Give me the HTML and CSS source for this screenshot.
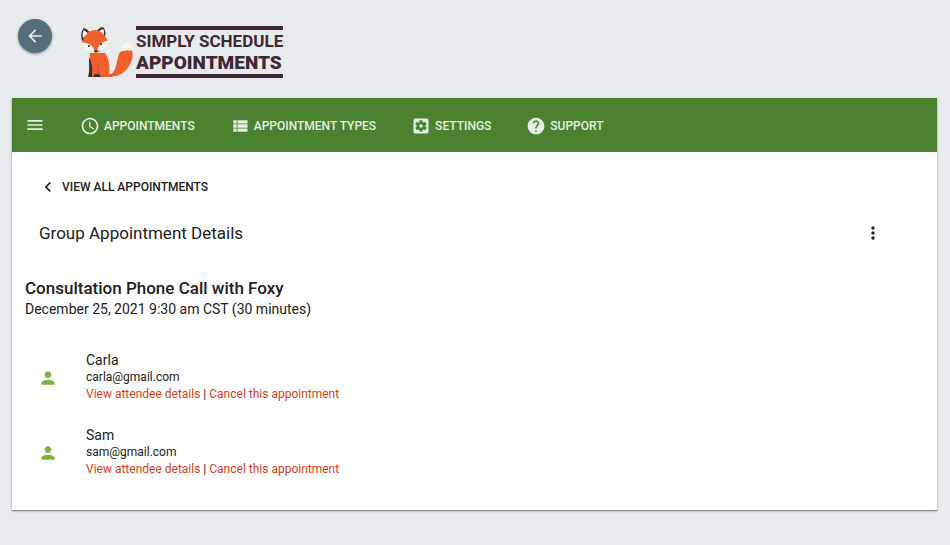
FILE: index.html
```
<!DOCTYPE html>
<html lang="en">
<head>
  <meta charset="UTF-8">
  <meta name="viewport" content="width=device-width, initial-scale=1">
  <title>Simply Schedule Appointments</title>
  <link rel="stylesheet" href="styles.css">
</head>
<body>
  <header class="header">
    <button type="button" class="back-button" aria-label="Back">
      <svg viewBox="0 0 24 24"><path d="M20 11H7.830l5.590-5.590L12 4l-8 8 8 8 1.410-1.410L7.830 13H20v-2z"/></svg>
    </button>
    <div class="logo">
      <svg class="fox" viewBox="0 0 54 54">
        <!-- tail -->
        <path fill="#f15f2c" d="M26 51C36 46 35 38 37 31C38 27 40 24 42 22L51 24C53 31 50 39 45 44C40 49 35 51 26 51z"/>
        <path fill="#fdf3e7" d="M39 26C40 20 45 16 49 15C50 18 52 20 52 25C50 23 48 26 46 24C44 26 41 24 39 26z"/>
        <!-- body -->
        <path fill="#f15f2c" d="M9 27H24C29 34 29 43 28 48H35L30 51H10C8 43 8 35 9 27z"/>
        <path fill="#3f2834" d="M8 32C12 37 11 45 11 51H7C9 45 8 38 8 32zM14 48H18L20 51H12z"/>
        <path fill="none" stroke="#b54731" stroke-dasharray="2 1" d="M18 37C16 41 17 45 18 48"/>
        <!-- ears -->
        <path fill="#3f2834" d="M1 15C-1 8 1 4 3 2C6 3 9 6 10 8L4 14zM16 5C18 2 20 1 22 1C25 4 25 9 23 13L16 8z"/>
        <path fill="#fdf3e7" d="M2 12C1 8 2 5 3 4L8 8zM18 5L22 3C24 5 23 8 22 10z"/>
        <!-- face -->
        <path fill="#f15f2c" d="M1 18C3 9 8 4 14 4C20 4 25 10 27 16C25 21 20 25 15 27C8 25 4 22 1 18z"/>
        <path fill="#fdf3e7" d="M0 17C6 16 11 18 14 25L13 26C7 26 2 23 0 17zM28 15C22 15 18 17 16 25C22 25 27 21 28 15z"/>
        <circle cx="8" cy="20" r="1" fill="#3f2834"/>
        <circle cx="20" cy="18" r="1" fill="#3f2834"/>
        <ellipse cx="15" cy="25" rx="2" ry="1" fill="#3f2834"/>
      </svg>
      <div class="logo-text">
        <span class="logo-top">SIMPLY SCHEDULE</span>
        <span class="logo-bottom">APPOINTMENTS</span>
      </div>
    </div>
  </header>

  <main class="panel">
    <nav class="toolbar">
      <button type="button" class="menu-button" aria-label="Menu">
        <svg viewBox="0 0 24 24"><path d="M3 18h18v-2H3v2zm0-5h18v-2H3v2zm0-7v2h18V6H3z"/></svg>
      </button>
      <a href="#appointments" class="nav-link">
        <svg viewBox="0 0 24 24"><path d="M11.990 2C6.470 2 2 6.480 2 12s4.470 10 9.990 10C17.520 22 22 17.520 22 12S17.520 2 11.990 2zM12 20c-4.420 0-8-3.580-8-8s3.580-8 8-8 8 3.580 8 8-3.580 8-8 8zm.5-13H11v6l5.250 3.150.75-1.230-4.500-2.670z"/></svg>
        Appointments
      </a>
      <a href="#types" class="nav-link">
        <svg viewBox="0 0 24 24"><path d="M4 14h4v-4H4v4zm0 5h4v-4H4v4zM4 9h4V5H4v4zm5 5h12v-4H9v4zm0 5h12v-4H9v4zM9 5v4h12V5H9z"/></svg>
        Appointment Types
      </a>
      <a href="#settings" class="nav-link">
        <svg viewBox="0 0 24 24"><path d="M12 10c-1.100 0-2 .9-2 2s.9 2 2 2 2-.9 2-2-.9-2-2-2zm7-7H5c-1.110 0-2 .9-2 2v14c0 1.100.89 2 2 2h14c1.110 0 2-.9 2-2V5c0-1.100-.89-2-2-2zm-1.750 9c0 .23-.02.46-.05.68l1.480 1.160c.13.11.17.3.08.45l-1.400 2.420c-.09.15-.27.21-.43.15l-1.740-.7c-.36.28-.76.51-1.180.69l-.26 1.850c-.03.17-.18.3-.35.3h-2.800c-.17 0-.32-.13-.35-.29l-.26-1.850c-.43-.18-.82-.41-1.180-.69l-1.740.7c-.16.06-.34 0-.43-.15l-1.400-2.420c-.09-.15-.05-.34.08-.45l1.480-1.160c-.03-.23-.05-.46-.05-.69s.02-.46.05-.68l-1.480-1.160c-.13-.11-.17-.3-.08-.45l1.400-2.420c.09-.15.27-.21.43-.15l1.740.7c.36-.28.76-.51 1.180-.69l.26-1.850c.03-.17.18-.3.35-.3h2.800c.17 0 .32.13.35.29l.26 1.850c.43.18.82.41 1.180.69l1.740-.7c.16-.06.34 0 .43.15l1.400 2.420c.09.15.05.34-.08.45l-1.480 1.160c.03.23.05.46.05.69z"/></svg>
        Settings
      </a>
      <a href="#support" class="nav-link">
        <svg viewBox="0 0 24 24"><path d="M12 2C6.480 2 2 6.480 2 12s4.480 10 10 10 10-4.480 10-10S17.520 2 12 2zm1 17h-2v-2h2v2zm2.070-7.750l-.9.920C13.450 12.900 13 13.500 13 15h-2v-.5c0-1.100.45-2.100 1.170-2.830l1.240-1.260c.37-.36.59-.86.59-1.410 0-1.100-.9-2-2-2s-2 .9-2 2H8c0-2.210 1.790-4 4-4s4 1.790 4 4c0 .88-.36 1.680-.93 2.250z"/></svg>
        Support
      </a>
    </nav>

    <a href="#all" class="view-all">
      <svg viewBox="0 0 24 24"><path d="M15.410 7.410L14 6l-6 6 6 6 1.410-1.410L10.830 12z"/></svg>
      View all appointments
    </a>

    <div class="title-bar">
      <h1>Group Appointment Details</h1>
      <button type="button" class="more-button" aria-label="More options">
        <svg viewBox="0 0 24 24"><path d="M12 8c1.100 0 2-.9 2-2s-.9-2-2-2-2 .9-2 2 .9 2 2 2zm0 2c-1.100 0-2 .9-2 2s.9 2 2 2 2-.9 2-2-.9-2-2-2zm0 6c-1.100 0-2 .9-2 2s.9 2 2 2 2-.9 2-2-.9-2-2-2z"/></svg>
      </button>
    </div>

    <section class="summary">
      <h2>Consultation Phone Call with Foxy</h2>
      <p>December 25, 2021 9:30 am CST (30 minutes)</p>
    </section>

    <ul class="attendees">
      <li class="attendee">
        <svg viewBox="0 0 24 24"><path d="M12 12c2.210 0 4-1.790 4-4s-1.790-4-4-4-4 1.790-4 4 1.790 4 4 4zm0 2c-2.670 0-8 1.340-8 4v2h16v-2c0-2.660-5.330-4-8-4z"/></svg>
        <div>
          <h3>Carla</h3>
          <p>carla@gmail.com</p>
          <p><a href="#carla">View attendee details</a> | <a href="#cancel-carla">Cancel this appointment</a></p>
        </div>
      </li>
      <li class="attendee">
        <svg viewBox="0 0 24 24"><path d="M12 12c2.210 0 4-1.790 4-4s-1.790-4-4-4-4 1.790-4 4 1.790 4 4 4zm0 2c-2.670 0-8 1.340-8 4v2h16v-2c0-2.660-5.330-4-8-4z"/></svg>
        <div>
          <h3>Sam</h3>
          <p>sam@gmail.com</p>
          <p><a href="#sam">View attendee details</a> | <a href="#cancel-sam">Cancel this appointment</a></p>
        </div>
      </li>
    </ul>
  </main>
</body>
</html>
```
FILE: styles.css
```
* {
  box-sizing: border-box;
}

body {
  margin: 0;
  padding: 0 13px 35px 12px;
  background: #e7ebee;
  color: #212121;
  font-family: Roboto, sans-serif;
  font-size: 12px;
}

h1, h2, h3, p, ul {
  margin: 0;
  padding: 0;
}

button {
  padding: 0;
  border: 0;
  background: none;
  color: inherit;
  cursor: pointer;
}

a {
  color: #d63d20;
  text-decoration: none;
}

svg {
  display: block;
  flex: none;
  fill: currentColor;
  width: 20px;
  height: 20px;
}

.header {
  display: flex;
  align-items: flex-start;
  gap: 29px;
  height: 98px;
  padding: 19px 6px 0;
}

.back-button {
  display: flex;
  align-items: center;
  justify-content: center;
  width: 34px;
  height: 34px;
  border-radius: 50%;
  background: #546e7a;
  color: #e7ebee;
  box-shadow: 0 1px 3px rgba(0, 0, 0, 0.4);
}

.logo {
  display: flex;
  padding-top: 7px;
  gap: 1px;
}

.fox {
  width: 54px;
  height: 54px;
}

.logo-text {
  display: flex;
  flex-direction: column;
  height: 52px;
  padding-top: 1px;
  border-top: 4px solid #3f2834;
  border-bottom: 4px solid #3f2834;
  color: #3f2834;
  line-height: 21px;
  white-space: nowrap;
}

.logo-top {
  font-size: 17px;
  font-weight: 700;
}

.logo-bottom {
  font-size: 19px;
  font-weight: 900;
}

.panel {
  background: #fff;
  padding-bottom: 32px;
  box-shadow: 0 1px 1px rgba(0, 0, 0, 0.35), 0 1px 3px rgba(0, 0, 0, 0.2);
}

.toolbar {
  display: flex;
  align-items: center;
  height: 54px;
  padding: 0 13px;
  background: #4b8230;
  color: #e9f0e5;
}

.menu-button {
  margin-right: 35px;
}

.nav-link {
  display: flex;
  align-items: center;
  gap: 4px;
  margin-right: 35px;
  padding-top: 2px;
  color: inherit;
  font-weight: 500;
  line-height: 20px;
  text-transform: uppercase;
}

.view-all {
  display: flex;
  align-items: center;
  gap: 4px;
  width: max-content;
  padding: 25px 0 0 26px;
  color: #212121;
  font-weight: 500;
  line-height: 20px;
  text-transform: uppercase;
}

.title-bar {
  display: flex;
  align-items: center;
  justify-content: space-between;
  padding: 24px 54px 0 27px;
}

h1 {
  font-size: 17px;
  font-weight: 400;
  line-height: 24px;
}

.summary {
  padding: 31px 13px 0;
}

h2 {
  font-size: 17px;
  font-weight: 500;
  line-height: 24px;
}

.summary p {
  font-size: 14px;
  line-height: 18px;
}

.attendees {
  padding: 34px 27px 0 26px;
  list-style: none;
}

.attendee {
  display: flex;
  align-items: center;
  gap: 28px;
}

.attendee + .attendee {
  margin-top: 24px;
}

.attendee svg {
  color: #7cb342;
}

h3 {
  font-size: 14px;
  font-weight: 400;
  line-height: 17px;
}

.attendee p {
  line-height: 17px;
}
```
